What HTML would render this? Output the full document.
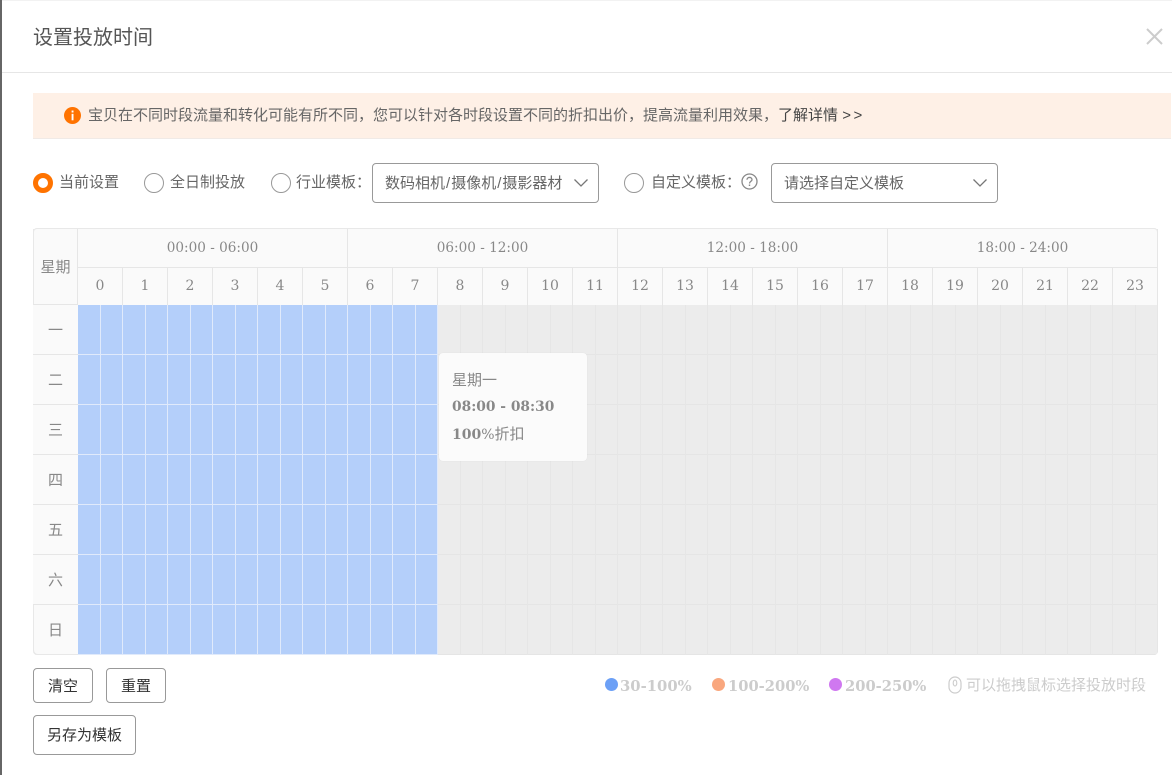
<!DOCTYPE html>
<html lang="zh"><head><meta charset="utf-8"><style>
html,body{margin:0;padding:0;background:#fff}
body{width:1172px;height:775px;overflow:hidden;position:relative;font-family:"Liberation Sans","Noto Sans CJK SC",sans-serif;font-size:15px;color:#666}
.a{position:absolute;white-space:nowrap}
.serif{font-family:"DejaVu Serif","Noto Sans CJK SC",serif}
.r{position:absolute;top:173px;width:18px;height:18px;border:1px solid #999;border-radius:50%;background:#fff}
.t{position:absolute;top:173px;line-height:20px;white-space:nowrap;color:#666}
.sel{position:absolute;top:163px;height:38px;border:1px solid #999;border-radius:4px;background:#fff;line-height:39px;color:#666;box-sizing:content-box}
.sel span{position:absolute;left:12px;white-space:nowrap}
.sel i{font-style:normal;padding:0 1px}
.sel svg{position:absolute;top:13px}
.btn{position:absolute;border:1px solid #999;border-radius:4px;background:#fff;text-align:center;color:#333;box-sizing:border-box}
.h1{position:absolute;top:229px;height:38px;line-height:38px;text-align:center;font-size:13.6px;color:#888;border-right:1px solid #e6e6e6;box-sizing:border-box;font-family:"DejaVu Serif",serif}
.h2{position:absolute;top:267px;width:45px;height:38px;line-height:38px;text-align:center;font-size:14px;color:#888;border-right:1px solid #e6e6e6;box-sizing:border-box;font-family:"DejaVu Serif",serif}
.d{position:absolute;left:33px;width:45px;height:50px;line-height:52px;text-align:center;color:#888;background:#fafafa;border-bottom:1px solid #e6e6e6;box-sizing:border-box}
</style></head><body>
<div class="a" style="left:0;top:0;width:2px;height:775px;background:#666"></div>
<div class="a" style="left:2px;top:0;width:1170px;height:1px;background:#f2f2f2"></div>
<div class="a" style="left:33px;top:25px;font-size:20px;line-height:26px;color:#555">设置投放时间</div>
<svg class="a" style="left:1146px;top:28px" width="17" height="17" viewBox="0 0 17 17"><path d="M1 1L16 16M16 1L1 16" stroke="#ccc" stroke-width="2" fill="none"/></svg>
<div class="a" style="left:2px;top:72px;width:1170px;height:1px;background:#e6e6e6"></div>

<div class="a" style="left:33px;top:93px;width:1138px;height:46px;background:#fef0e6;border-bottom:1px solid #f0eae6;box-sizing:border-box"></div>
<svg class="a" style="left:64px;top:107px" width="17" height="17" viewBox="0 0 17 17"><circle cx="8.5" cy="8.5" r="8.5" fill="#ff7300"/><rect x="7.6" y="3.5" width="1.9" height="2" fill="#fff"/><rect x="7.6" y="6.8" width="1.9" height="6.5" fill="#fff"/></svg>
<div class="a" style="left:88px;top:106px;line-height:20px;color:#666">宝贝在不同时段流量和转化可能有所不同，您可以针对各时段设置不同的折扣出价，提高流量利用效果，<span style="color:#444">了解详情 <span style="letter-spacing:2.5px">&gt;&gt;</span></span></div>

<div class="r" style="left:33px;width:10px;height:10px;border:5px solid #ff7300;top:173px"></div>
<div class="t" style="left:59px">当前设置</div>
<div class="r" style="left:144px"></div>
<div class="t" style="left:170px">全日制投放</div>
<div class="r" style="left:271px"></div>
<div class="t" style="left:296px">行业模板：</div>
<div class="sel" style="left:372px;width:225px"><span>数码相机<i>/</i>摄像机<i>/</i>摄影器材</span><svg style="left:200px" width="16" height="12" viewBox="0 0 16 12"><path d="M1.5 2.5L8 9L14.500 2.500" stroke="#777" stroke-width="1.3" fill="none"/></svg></div>
<div class="r" style="left:624px"></div>
<div class="t" style="left:651px">自定义模板：</div>
<svg class="a" style="left:741px;top:173px" width="17" height="17" viewBox="0 0 17 17"><circle cx="8.500" cy="8.500" r="7.500" stroke="#888" stroke-width="1.300" fill="none"/><path d="M6 6.700C6 3.700 11 3.700 11 6.700C11 8.300 8.500 8.300 8.500 10.500" stroke="#888" stroke-width="1.300" fill="none"/><rect x="7.800" y="11.500" width="1.400" height="1.500" fill="#888"/></svg>
<div class="sel" style="left:771px;width:225px"><span>请选择自定义模板</span><svg style="left:200px" width="16" height="12" viewBox="0 0 16 12"><path d="M1.500 2.500L8 9L14.500 2.500" stroke="#777" stroke-width="1.300" fill="none"/></svg></div>

<!-- table -->
<div class="a" style="left:33px;top:228px;width:1125px;height:427px;background:#fafafa;border-radius:4px;overflow:hidden;box-shadow:inset 0 0 0 1px #e8e8e8">
</div>
<div class="a" style="left:33px;top:229px;width:45px;height:76px;line-height:77px;text-align:center;color:#888;border-right:1px solid #e6e6e6;border-left:1px solid #e8e8e8;border-bottom:1px solid #e6e6e6;box-sizing:border-box">星期</div>
<div class="h1" style="left:78px;width:270px;line-height:39px">00:00 - 06:00</div>
<div class="h1" style="left:348px;width:270px;line-height:39px">06:00 - 12:00</div>
<div class="h1" style="left:618px;width:270px;line-height:39px">12:00 - 18:00</div>
<div class="h1" style="left:888px;width:270px;line-height:39px">18:00 - 24:00</div>
<div class="a" style="left:78px;top:267px;width:1080px;height:1px;background:#e6e6e6"></div>
<div class="h2" style="left:78px">0</div><div class="h2" style="left:123px">1</div><div class="h2" style="left:168px">2</div><div class="h2" style="left:213px">3</div><div class="h2" style="left:258px">4</div><div class="h2" style="left:303px">5</div><div class="h2" style="left:348px">6</div><div class="h2" style="left:393px">7</div><div class="h2" style="left:438px">8</div><div class="h2" style="left:483px">9</div><div class="h2" style="left:528px">10</div><div class="h2" style="left:573px">11</div><div class="h2" style="left:618px">12</div><div class="h2" style="left:663px">13</div><div class="h2" style="left:708px">14</div><div class="h2" style="left:753px">15</div><div class="h2" style="left:798px">16</div><div class="h2" style="left:843px">17</div><div class="h2" style="left:888px">18</div><div class="h2" style="left:933px">19</div><div class="h2" style="left:978px">20</div><div class="h2" style="left:1023px">21</div><div class="h2" style="left:1068px">22</div><div class="h2" style="left:1113px">23</div>

<div class="d" style="top:305px">一</div><div class="d" style="top:355px">二</div><div class="d" style="top:405px">三</div><div class="d" style="top:455px">四</div><div class="d" style="top:505px">五</div><div class="d" style="top:555px">六</div><div class="d" style="top:605px;border-bottom:0;border-radius:0 0 0 4px;box-shadow:inset 1px -1px 0 #e8e8e8">日</div>

<div class="a" style="left:78px;top:305px;width:360px;height:350px;background-color:#b4cffa;background-image:repeating-linear-gradient(90deg,transparent 0,transparent 22px,#e0eafb 22px,#e0eafb 23px,transparent 23px,transparent 44px,#e0eafb 44px,#e0eafb 45px),repeating-linear-gradient(180deg,transparent 0,transparent 49px,#e0eafb 49px,#e0eafb 50px)"></div>
<div class="a" style="left:438px;top:305px;width:720px;height:350px;border-radius:0 0 4px 0;background-color:#ececec;background-image:repeating-linear-gradient(90deg,transparent 0,transparent 22px,#e6e6e6 22px,#e6e6e6 23px,transparent 23px,transparent 44px,#e6e6e6 44px,#e6e6e6 45px),repeating-linear-gradient(180deg,transparent 0,transparent 49px,#e5e5e5 49px,#e5e5e5 50px)"></div>

<div class="a" style="left:439px;top:353px;width:148px;height:108px;background:#fbfbfb;border-radius:4px;box-shadow:0 0 1px rgba(0,0,0,.08)"></div>
<div class="a" style="left:452px;top:371px;line-height:20px;color:#888">星期一</div>
<div class="a serif" style="left:452px;top:397px;line-height:20px;color:#888;font-size:13.8px;font-weight:bold">08:00 - 08:30</div>
<div class="a serif" style="left:452px;top:424px;line-height:20px;color:#888;font-size:14px"><b>100</b>%<span style="font-size:15px">折扣</span></div>

<div class="btn" style="left:33px;top:668px;width:60px;height:35px;line-height:35px">清空</div>
<div class="btn" style="left:106px;top:668px;width:60px;height:35px;line-height:35px">重置</div>
<div class="btn" style="left:33px;top:715px;width:103px;height:40px;line-height:40px">另存为模板</div>

<div class="a" style="left:605px;top:678px;width:13px;height:13px;border-radius:50%;background:#6ca0f6"></div>
<div class="a serif" style="left:620px;top:677px;line-height:20px;font-weight:bold;color:#ccc;font-size:14.800px">30-100%</div>
<div class="a" style="left:712px;top:678px;width:13px;height:13px;border-radius:50%;background:#f9a77e"></div>
<div class="a serif" style="left:728px;top:677px;line-height:20px;font-weight:bold;color:#ccc;font-size:14.700px">100-200%</div>
<div class="a" style="left:829px;top:678px;width:13px;height:13px;border-radius:50%;background:#cf78f0"></div>
<div class="a serif" style="left:845px;top:677px;line-height:20px;font-weight:bold;color:#ccc;font-size:14.700px">200-250%</div>
<svg class="a" style="left:948px;top:676px" width="15" height="19" viewBox="0 0 15 19"><rect x="1" y="1" width="12" height="16" rx="6" stroke="#ccc" stroke-width="1.200" fill="none"/><ellipse cx="7" cy="7" rx="1.800" ry="3" stroke="#ccc" stroke-width="1.100" fill="none"/></svg>
<div class="a" style="left:966px;top:676px;line-height:20px;color:#ccc">可以拖拽鼠标选择投放时段</div>
</body></html>
